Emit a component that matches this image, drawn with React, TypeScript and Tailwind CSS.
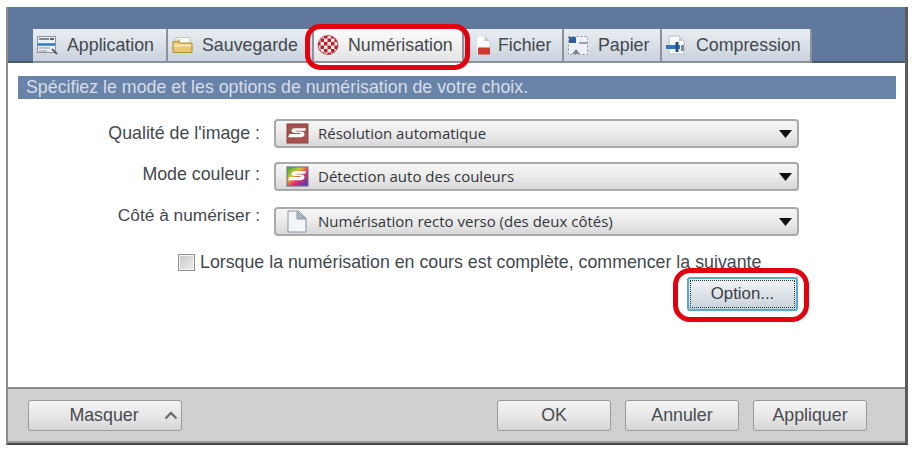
import type { ReactNode } from "react";

const sans = "font-['Liberation_Sans',Arial,sans-serif]";

function AppIcon() {
  return (
    <svg width="21" height="19" viewBox="0 0 21 19">
      <rect x="0.5" y="0.5" width="18" height="16" fill="#eef1f4" stroke="#8b95a0" />
      <path d="M2 3h10" stroke="#59636e" strokeWidth="1.500" />
      <rect x="13" y="2" width="4" height="2" fill="#59636e" />
      <path d="M1 8.500h17" stroke="#2f78c8" strokeWidth="2.500" />
      <path d="M2 12h11M2 15h8" stroke="#8c96a0" strokeWidth="1.200" />
      <path d="M15 13l5 5" stroke="#5a5a5a" strokeWidth="1.800" />
    </svg>
  );
}

function FolderIcon() {
  return (
    <svg width="21" height="20" viewBox="0 0 21 20">
      <rect x="4" y="2.500" width="14" height="7" fill="#fbfbf6" stroke="#c7c7bb" />
      <path d="M1 6.500h5l1-2v3.500h13v9.500H1z" fill="#e8c870" stroke="#b18c34" />
      <path d="M2 9.500h17v2H2z" fill="#f8eab8" />
    </svg>
  );
}

function ScanIcon() {
  return (
    <svg width="22" height="20" viewBox="0 0 22 20">
      <defs>
        <pattern id="chk" width="7" height="7" patternUnits="userSpaceOnUse">
          <rect width="7" height="7" fill="#f8e8e8" />
          <rect width="3.500" height="3.500" fill="#b8232f" />
          <rect x="3.500" y="3.500" width="3.500" height="3.500" fill="#b8232f" />
        </pattern>
      </defs>
      <ellipse cx="11" cy="10" rx="10" ry="9.500" fill="url(#chk)" stroke="#a8323c" strokeWidth="0.800" />
    </svg>
  );
}

function FileIcon() {
  return (
    <svg width="16" height="20" viewBox="0 0 16 20">
      <path d="M1.500 1h8l5 5v13h-13z" fill="#fcfcfc" stroke="#dcdcdc" />
      <path d="M9.500 1v5h5z" fill="#c4c4c4" />
      <rect x="3" y="12.500" width="12" height="7" fill="#cf3a30" />
    </svg>
  );
}

function PaperIcon() {
  return (
    <svg width="22" height="21" viewBox="0 0 22 21">
      <rect x="1.500" y="1.500" width="19" height="18" fill="#eef2f5" stroke="#8d959d" strokeDasharray="2 2" />
      <rect x="2" y="2" width="7" height="6" fill="#34609c" />
      <path d="M12 8h8" stroke="#7b8790" strokeWidth="1.500" />
      <path d="M5 19l4-5 4 5z" fill="#7b8790" />
    </svg>
  );
}

function CompressIcon() {
  return (
    <svg width="22" height="20" viewBox="0 0 22 20">
      <path d="M4 1h10l5 5v13H4z" fill="#fafbfc" stroke="#b8bfc6" />
      <path d="M14 1v5h5z" fill="#c8ced4" />
      <rect x="1" y="10" width="14" height="4" fill="#2f78c8" />
      <path d="M12 7v10" stroke="#1e4f8a" strokeWidth="3" />
      <rect x="16" y="10" width="3" height="6" fill="#7d8b99" />
    </svg>
  );
}

function LogoIcon({ color }: { color: boolean }) {
  return (
    <svg width="23" height="21" viewBox="0 0 24 22">
      <defs>
        <linearGradient id="rainbow" x1="0" y1="0" x2="1" y2="1">
          <stop offset="0" stopColor="#22a845" />
          <stop offset="0.35" stopColor="#d8c52c" />
          <stop offset="0.6" stopColor="#e0306a" />
          <stop offset="1" stopColor="#3040c8" />
        </linearGradient>
      </defs>
      <rect x="1" y="1" width="22" height="20" fill={color ? "url(#rainbow)" : "#a5524f"} stroke={color ? "#6a6a80" : "#8a4442"} />
      <path
        d="M21 5.500H10C6.500 5.500 5 7 6 9c.7 1.400 2.500 1.600 4.500 1.600h4c.9 0 .9 1-.3 1H3.500l-1.200 3.400h12c3.600 0 5.600-1.700 4.900-4-.4-1.500-2-2-4.200-2H10.500c-.8 0-.7-.8.2-.8h9.300z"
        fill="#fdfdfd"
      />
    </svg>
  );
}

function PageIcon() {
  return (
    <svg width="22" height="23" viewBox="0 0 22 23">
      <path d="M2 1h11l7 7.500V22H2z" fill="#f4f5f8" stroke="#8b97a5" />
      <path d="M11 1.500V9h9z" fill="#aeb4bb" stroke="#8b97a5" />
    </svg>
  );
}

function Tab({ icon, label, width, active }: { icon: ReactNode; label: string; width: string; active?: boolean }) {
  return (
    <div
      className={`${width} h-[34px] flex items-center gap-[8px] pl-[3px] border-r-2 border-b-2 border-[#8b929b] text-[17.8px] text-[#44484e] ${
        active ? "bg-gradient-to-b from-[#fcfcfc] to-[#e4e4e4]" : "bg-gradient-to-b from-[#eaeef2] to-[#c9d3dd]"
      }`}
    >
      <span className="flex w-[22px] h-[22px] items-center justify-center shrink-0">{icon}</span>
      <span className="pl-[1px] whitespace-nowrap">{label}</span>
    </div>
  );
}

function SelectRow({ label, labelClass, icon, value, className }: { label: string; labelClass: string; icon: ReactNode; value: string; className: string }) {
  return (
    <div className={`flex items-center h-[29px] ${className}`}>
      <span className={`w-[243px] pr-[1px] text-right text-[#44484e] ${labelClass}`}>{label}</span>
      <div className="ml-[13px] w-[525px] h-[29px] flex items-center rounded-[4px] border-2 border-[#aaaaaa] bg-gradient-to-b from-[#f6f6f6] via-[#ebebeb] to-[#d8d8d8]">
        <span className="ml-[9px] flex w-[24px] h-[24px] items-center justify-center">{icon}</span>
        <span className="ml-[9px] flex-1 text-[15px] font-['Open_Sans',sans-serif] text-[#33363b]">{value}</span>
        <svg width="13" height="8" viewBox="0 0 13 8" className="mr-[5px]">
          <path d="M0 0h13L6.500 8z" fill="#101010" />
        </svg>
      </div>
    </div>
  );
}

function FooterButton({ label, className, children }: { label: string; className: string; children?: ReactNode }) {
  return (
    <div className={`h-[31px] rounded-[3px] border border-[#9a9a9a] bg-gradient-to-b from-[#f4f4f4] via-[#e8e8e8] to-[#d6d6d6] flex items-center justify-center relative text-[17.8px] text-[#484b50] ${className}`}>
      {label}
      {children}
    </div>
  );
}

export default function App() {
  return (
    <div className={`${sans} w-[915px] h-[451px] bg-white pt-[7px] pl-[6px] overflow-hidden`}>
      <div className="relative w-[902px] h-[438px] flex flex-col border-l-2 border-[#8d8d8d] border-r-[3px] border-r-[#5c5c5c] border-b-2 border-b-[#444]">
        {/* Tabs */}
        <div className="h-[56px] shrink-0 bg-[#5f789b] flex items-end pl-[25px] border-b-2 border-[#4d5a6c]">
          <div className="flex -mb-[2px]">
            <Tab icon={<AppIcon />} label="Application" width="w-[135px]" />
            <Tab icon={<FolderIcon />} label="Sauvegarde" width="w-[146px]" />
            <Tab icon={<ScanIcon />} label="Numérisation" width="w-[150px]" active />
            <Tab icon={<span className="pl-[9px]"><FileIcon /></span>} label="Fichier" width="w-[100px]" />
            <Tab icon={<PaperIcon />} label="Papier" width="w-[98px]" />
            <Tab icon={<CompressIcon />} label="Compression" width="w-[150px]" />
          </div>
        </div>

        {/* Content */}
        <div className="flex-1 bg-white pt-[13px] pl-[10px]">
          <div className="w-[878px] h-[23px] bg-[#6a83a8] pl-[8px] flex items-center text-[17.8px] text-[#d5deea] whitespace-nowrap">
            Spécifiez le mode et les options de numérisation de votre choix.
          </div>
          <SelectRow className="mt-[20px]" labelClass="text-[17.8px]" label="Qualité de l'image :" icon={<LogoIcon color={false} />} value="Résolution automatique" />
          <SelectRow className="mt-[14px]" labelClass="text-[17.8px] pb-[4px]" label="Mode couleur :" icon={<LogoIcon color />} value="Détection auto des couleurs" />
          <SelectRow className="mt-[16px]" labelClass="text-[17.3px] pb-[12px]" label="Côté à numériser :" icon={<PageIcon />} value="Numérisation recto verso (des deux côtés)" />
          <div className="mt-[18px] ml-[160px] flex items-center gap-[5px] h-[17px] text-[17.8px] text-[#44484e] whitespace-nowrap">
            <span className="w-[17px] h-[17px] border border-[#8f8f8f] bg-gradient-to-br from-[#c4c4c4] to-[#f0f0f0] shadow-[inset_0_0_0_1px_#f4f4f4]" />
            Lorsque la numérisation en cours est complète, commencer la suivante
          </div>
          <div className="mt-[6px] ml-[669px] w-[111px] h-[34px] rounded-[3px] border-2 border-[#5aa9cf] bg-gradient-to-b from-[#f2f5f7] to-[#c9d3da] p-[1px]">
            <div className="w-full h-full border border-dotted border-[#333] flex items-center justify-center text-[16.8px] text-[#3c3f44]">Option...</div>
          </div>
        </div>

        {/* Footer */}
        <div className="h-[56px] shrink-0 bg-[#d0d0d0] border-t-2 border-[#8f8f8f] border-b-2 border-b-[#9a9a9a] flex items-center pl-[20px]">
          <FooterButton label="Masquer" className="w-[154px] pr-[2px]">
            <svg width="14" height="9" viewBox="0 0 14 9" className="absolute right-[3px] top-[10px]">
              <path d="M1.500 7.500L7 2l5.500 5.500" fill="none" stroke="#6f6f6f" strokeWidth="2.400" />
            </svg>
          </FooterButton>
          <FooterButton label="OK" className="w-[114px] ml-[315px]" />
          <FooterButton label="Annuler" className="w-[114px] ml-[14px]" />
          <FooterButton label="Appliquer" className="w-[114px] ml-[14px]" />
        </div>

        {/* Red callouts */}
        <div className="absolute left-[297px] top-[17px] w-[165px] h-[46px] rounded-[15px] border-[5px] border-[#e3000f]" />
        <div className="absolute left-[665px] top-[261px] w-[136px] h-[54px] rounded-[17px] border-[5px] border-[#e3000f]" />
      </div>
    </div>
  );
}
